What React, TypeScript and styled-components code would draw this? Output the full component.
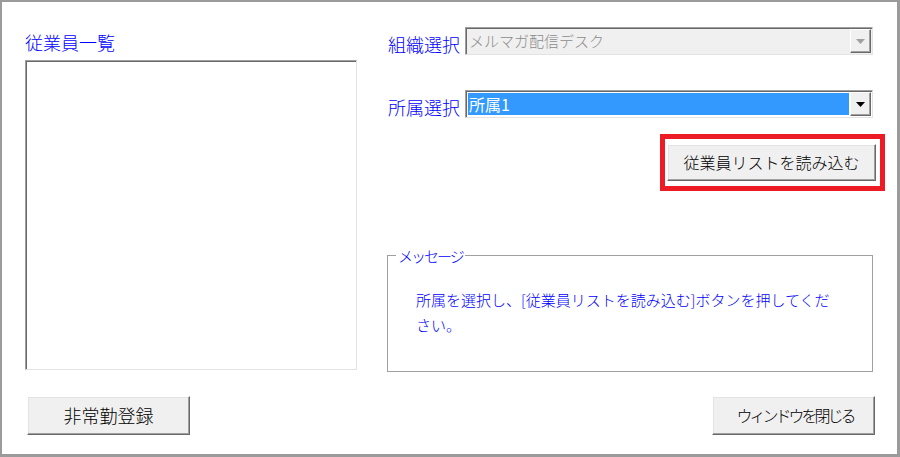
import React from "react";
import styled, { createGlobalStyle } from "styled-components";

const GlobalStyle = createGlobalStyle`
    html, body {
        margin: 0;
        padding: 0;
        background: #ffffff;
    }
    body {
        font-family: "Noto Sans CJK JP", "Noto Sans", sans-serif;
        font-weight: 300;
    }
    * {
        box-sizing: border-box;
    }
`;

const Window = styled.div`
    width: 900px;
    height: 457px;
    border-style: solid;
    border-color: #9b9b9b;
    border-width: 2px 3px 3px 2px;
    background: #ffffff;
    padding: 0 12px 0 23px;
    display: flex;
    flex-direction: column;
`;

const TopSection = styled.div`
    display: flex;
    gap: 30px;
`;

const LeftColumn = styled.div`
    width: 332px;
    display: flex;
    flex-direction: column;
`;

const RightColumn = styled.div`
    width: 498px;
    display: flex;
    flex-direction: column;
    align-items: flex-start;
`;

const SectionLabel = styled.div`
    margin-top: 30px;
    font-size: 18px;
    line-height: 20px;
    color: #0000ff;
`;

const ListBox = styled.div`
    margin-top: 8px;
    height: 310px;
    background: #ffffff;
    border-style: solid;
    border-width: 1px;
    border-color: #a0a0a0 #e3e3e3 #e3e3e3 #a0a0a0;
    box-shadow: inset 1px 1px 0 #696969;
`;

const FieldRow = styled.div<{ $top: number }>`
    display: flex;
    align-items: center;
    margin-top: ${(p) => p.$top}px;
`;

const FieldLabel = styled.div`
    width: 78px;
    padding: 5px 0 0 1px;
    font-size: 18px;
    line-height: 20px;
    color: #0000ff;
    white-space: nowrap;
`;

const Combo = styled.div<{ $disabled?: boolean }>`
    width: 408px;
    height: 28px;
    display: flex;
    padding: 1px;
    background: ${(p) => (p.$disabled ? "#f0f0f0" : "#ffffff")};
    border-style: solid;
    border-width: 1px;
    border-color: #a0a0a0 #e3e3e3 #e3e3e3 #a0a0a0;
    box-shadow: inset 1px 1px 0 #696969;
`;

const ComboValue = styled.div<{ $selected?: boolean; $disabled?: boolean; $size: number }>`
    flex: 1;
    margin: 1px 0 1px 1px;
    padding-left: 1px;
    background: ${(p) => (p.$selected ? "#3399ff" : "transparent")};
    color: ${(p) => (p.$selected ? "#ffffff" : p.$disabled ? "#8c8c8c" : "#000000")};
    font-size: ${(p) => p.$size}px;
    font-weight: ${(p) => (p.$selected ? 400 : 300)};
    line-height: 22px;
    white-space: nowrap;
    overflow: hidden;
`;

const DropButton = styled.div`
    width: 21px;
    margin-left: 1px;
    display: flex;
    align-items: center;
    justify-content: center;
    background: #f0f0f0;
    border-style: solid;
    border-width: 1px;
    border-color: #ffffff #696969 #696969 #ffffff;
    box-shadow: inset -1px -1px 0 #a0a0a0;
`;

const HighlightFrame = styled.div`
    align-self: flex-end;
    margin-top: 16px;
    width: 225px;
    height: 57px;
    border: 5px solid #ed1c24;
    padding: 0 3px 0 2px;
    display: flex;
    align-items: center;
`;

const PushButton = styled.button<{ $width: number; $height: number; $size: number; $spacing?: number }>`
    width: ${(p) => p.$width}px;
    height: ${(p) => p.$height}px;
    padding: 0 0 2px ${(p) => -(p.$spacing ?? 0)}px;
    margin: 0;
    background: #f0f0f0;
    color: #000000;
    font-family: "Noto Sans CJK JP", "Noto Sans", sans-serif;
    font-weight: 300;
    font-size: ${(p) => p.$size}px;
    letter-spacing: ${(p) => p.$spacing ?? 0}px;
    line-height: 20px;
    white-space: nowrap;
    border-style: solid;
    border-width: 1px;
    border-color: #ffffff #696969 #696969 #ffffff;
    box-shadow: inset -1px -1px 0 #a0a0a0, inset 1px 1px 0 #e3e3e3;
    cursor: default;
`;

const MessageBox = styled.fieldset`
    margin: 57px 0 0 0;
    width: 486px;
    height: 124px;
    padding: 0;
    min-width: 0;
    border: 1px solid #a0a0a0;
`;

const MessageLegend = styled.legend`
    margin-left: 8px;
    padding: 0 2px;
    font-size: 15px;
    line-height: 15px;
    letter-spacing: -2px;
    color: #0000ff;
`;

const MessageText = styled.div`
    margin: 24px 0 0 28px;
    width: 422px;
    font-size: 15px;
    line-height: 25px;
    color: #0000ff;
`;

const BottomRow = styled.div`
    display: flex;
    justify-content: space-between;
    margin-top: 24px;
    padding: 0 10px 0 2px;
`;

const ArrowIcon = ({ color }: { color: string }) => (
    <svg width="9" height="5" viewBox="0 0 9 5">
        <polygon points="0,0 9,0 4.5,5" fill={color} />
    </svg>
);

export default function App() {
    return (
        <>
            <GlobalStyle />
            <Window>
                <TopSection>
                    <LeftColumn>
                        <SectionLabel>従業員一覧</SectionLabel>
                        <ListBox />
                    </LeftColumn>
                    <RightColumn>
                        <FieldRow $top={25}>
                            <FieldLabel>組織選択</FieldLabel>
                            <Combo $disabled>
                                <ComboValue $disabled $size={15}>
                                    メルマガ配信デスク
                                </ComboValue>
                                <DropButton>
                                    <ArrowIcon color="#a0a0a0" />
                                </DropButton>
                            </Combo>
                        </FieldRow>
                        <FieldRow $top={35}>
                            <FieldLabel>所属選択</FieldLabel>
                            <Combo>
                                <ComboValue $selected $size={16}>
                                    所属1
                                </ComboValue>
                                <DropButton>
                                    <ArrowIcon color="#000000" />
                                </DropButton>
                            </Combo>
                        </FieldRow>
                        <HighlightFrame>
                            <PushButton $width={209} $height={37} $size={16}>
                                従業員リストを読み込む
                            </PushButton>
                        </HighlightFrame>
                        <MessageBox>
                            <MessageLegend>メッセージ</MessageLegend>
                            <MessageText>
                                所属を選択し、[従業員リストを読み込む]ボタンを押してください。
                            </MessageText>
                        </MessageBox>
                    </RightColumn>
                </TopSection>
                <BottomRow>
                    <PushButton $width={163} $height={39} $size={18}>
                        非常勤登録
                    </PushButton>
                    <PushButton $width={163} $height={39} $size={16} $spacing={-3}>
                        ウィンドウを閉じる
                    </PushButton>
                </BottomRow>
            </Window>
        </>
    );
}
